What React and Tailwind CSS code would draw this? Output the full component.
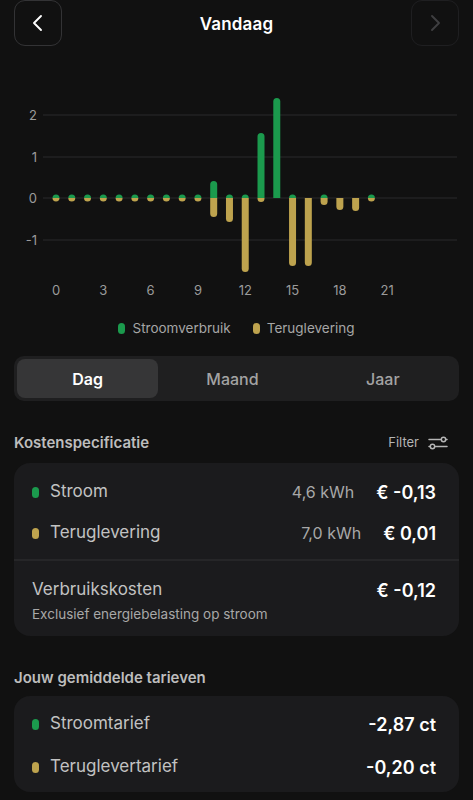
import React from "react";

const GREEN = "#1b9a4d";
const YELLOW = "#bea34e";

const ZERO = 151;
const X0 = 56;
const DX = 15.77;
const R = 3.5;

const bars = [
  [R, R], [R, R], [R, R], [R, R], [R, R], [R, R], [R, R], [R, R], [R, R], [R, R],
  [17, 19], [R, 24], [R, 74], [65, 4], [100, null], [R, 68], [null, 68], [R, 7], [null, 12], [null, 13], [R, R],
];

function upPath(x, h) {
  const hh = Math.max(h, R);
  return `M${x - R},${ZERO} L${x - R},${ZERO - hh + R} A${R},${R} 0 0 1 ${x + R},${ZERO - hh + R} L${x + R},${ZERO} Z`;
}
function downPath(x, h) {
  const hh = Math.max(h, R);
  return `M${x - R},${ZERO} L${x - R},${ZERO + hh - R} A${R},${R} 0 0 0 ${x + R},${ZERO + hh - R} L${x + R},${ZERO} Z`;
}

function Chart() {
  const grid = [
    { v: "2", y: 68 },
    { v: "1", y: 110 },
    { v: "0", y: 151 },
    { v: "-1", y: 193 },
  ];
  const xl = [0, 3, 6, 9, 12, 15, 18, 21];
  return (
    <svg width="473" height="258" viewBox="0 0 473 258" className="block">
      {grid.map((g) => (
        <g key={g.v}>
          <line x1="43" x2="457" y1={g.y} y2={g.y} stroke="#2a2a2c" strokeWidth="1.2" />
          <text x="37" y={g.y + 4.5} textAnchor="end" fill="#9b9b9b" fontSize="13" fontFamily="Inter, sans-serif">
            {g.v}
          </text>
        </g>
      ))}
      {bars.map(([g, y], i) => {
        const x = X0 + i * DX;
        return (
          <g key={i}>
            {g !== null && <path d={upPath(x, g)} fill={GREEN} />}
            {y !== null && <path d={downPath(x, y)} fill={YELLOW} />}
          </g>
        );
      })}
      {xl.map((h) => (
        <text key={h} x={X0 + h * DX} y="248" textAnchor="middle" fill="#9b9b9b" fontSize="13" fontFamily="Inter, sans-serif">
          {h}
        </text>
      ))}
    </svg>
  );
}

function Dot({ color }) {
  return <span className="inline-block w-[7px] h-[11px] rounded-full shrink-0" style={{ backgroundColor: color }} />;
}

function FilterIcon() {
  return (
    <svg width="20" height="14" viewBox="0 0 20 14" fill="none" stroke="#b5b5b5" strokeWidth="1.5" strokeLinecap="round">
      <line x1="1" y1="3.5" x2="12.5" y2="3.5" />
      <circle cx="15.5" cy="3.5" r="2.2" />
      <line x1="18" y1="3.5" x2="19" y2="3.5" />
      <line x1="7.5" y1="10.5" x2="19" y2="10.5" />
      <circle cx="4.5" cy="10.5" r="2.2" />
      <line x1="1" y1="10.5" x2="2" y2="10.5" />
    </svg>
  );
}

export default function App() {
  return (
    <div className="w-[473px] min-h-[800px] bg-[#111111] text-white overflow-hidden" style={{ fontFamily: "Inter, 'Noto Sans', sans-serif" }}>
      {/* Header */}
      <div className="h-[47px] flex items-start justify-between px-[14px]">
        <button className="w-[48px] h-[46px] rounded-[11px] border border-[#333335] flex items-center justify-center">
          <svg width="14" height="18" viewBox="0 0 14 18" fill="none" stroke="#ffffff" strokeWidth="1.9" strokeLinecap="round" strokeLinejoin="round">
            <polyline points="10,2 3,9 10,16" />
          </svg>
        </button>
        <div className="h-[46px] pt-[4px] flex items-center text-[17px] font-semibold tracking-[0.2px]">Vandaag</div>
        <button className="w-[48px] h-[46px] rounded-[11px] border border-[#1f1f21] flex items-center justify-center">
          <svg width="14" height="18" viewBox="0 0 14 18" fill="none" stroke="#3f3f41" strokeWidth="1.9" strokeLinecap="round" strokeLinejoin="round">
            <polyline points="4,2 11,9 4,16" />
          </svg>
        </button>
      </div>

      <Chart />

      {/* Legend */}
      <div className="h-[44px] pt-[2px] flex items-center justify-center gap-[6px] text-[13.5px] text-[#a6a6a6]">
        <div className="flex items-center gap-[7px]">
          <Dot color={GREEN} />
          <span>Stroomverbruik</span>
        </div>
        <div className="flex items-center gap-[7px] ml-[16px]">
          <Dot color={YELLOW} />
          <span>Teruglevering</span>
        </div>
      </div>

      {/* Tabs */}
      <div className="mx-[14px] mt-[7px] h-[45px] rounded-[10px] bg-[#1f1f20] p-[3px] grid grid-cols-3 text-[16px]">
        <div className="rounded-[8px] bg-[#363637] flex items-center justify-center font-semibold text-white mr-[5px]">Dag</div>
        <div className="flex items-center justify-center font-medium text-[#a3a3a3] -ml-[8px]">Maand</div>
        <div className="flex items-center justify-center font-medium text-[#a3a3a3]">Jaar</div>
      </div>

      {/* Kostenspecificatie */}
      <div className="mx-[14px] mt-[32px] h-[20px] flex items-center justify-between">
        <span className="text-[15px] font-semibold text-[#bdbdbd]">Kostenspecificatie</span>
        <div className="flex items-center gap-[9px] mr-[11px] text-[13px] text-[#b5b5b5]">
          <span>Filter</span>
          <FilterIcon />
        </div>
      </div>

      <div className="mx-[14px] mt-[10px] rounded-[16px] bg-[#1b1b1d] overflow-hidden">
        <div className="pl-[18px] pr-[23px] pt-[15px] pb-[12px] flex flex-col gap-[13px]">
          <div className="h-[28px] flex items-center">
            <Dot color={GREEN} />
            <span className="ml-[11px] text-[17px] text-[#c2c2c2]">Stroom</span>
            <span className="ml-auto text-[16px] text-[#a8a8a8]">4,6 kWh</span>
            <span className="ml-[22px] text-[18px] font-semibold text-white">€ -0,13</span>
          </div>
          <div className="h-[28px] flex items-center">
            <Dot color={YELLOW} />
            <span className="ml-[11px] text-[17px] text-[#c2c2c2]">Teruglevering</span>
            <span className="ml-auto text-[16px] text-[#a8a8a8]">7,0 kWh</span>
            <span className="ml-[22px] text-[18px] font-semibold text-white">€ 0,01</span>
          </div>
        </div>
        <div className="h-[2px] bg-[#262628]" />
        <div className="pl-[18px] pr-[23px] pt-[17px] pb-[13px]">
          <div className="h-[24px] flex items-center">
            <span className="text-[17px] text-[#c2c2c2]">Verbruikskosten</span>
            <span className="ml-auto text-[18px] font-semibold text-white">€ -0,12</span>
          </div>
          <div className="mt-[3px] h-[18px] flex items-center text-[13.5px] text-[#a8a8a8]">
            Exclusief energiebelasting op stroom
          </div>
        </div>
      </div>

      {/* Tarieven */}
      <div className="mx-[14px] mt-[32px] h-[20px] flex items-center">
        <span className="text-[15px] font-semibold text-[#bdbdbd]">Jouw gemiddelde tarieven</span>
      </div>
      <div className="mx-[14px] mt-[8px] rounded-[16px] bg-[#1b1b1d] pl-[18px] pr-[23px] pt-[14px] pb-[11px] flex flex-col gap-[15px]">
        <div className="h-[28px] flex items-center">
          <Dot color={GREEN} />
          <span className="ml-[11px] text-[17px] text-[#c2c2c2]">Stroomtarief</span>
          <span className="ml-auto text-[18px] font-semibold text-white">-2,87 ct</span>
        </div>
        <div className="h-[28px] flex items-center">
          <Dot color={YELLOW} />
          <span className="ml-[11px] text-[17px] text-[#c2c2c2]">Teruglevertarief</span>
          <span className="ml-auto text-[18px] font-semibold text-white">-0,20 ct</span>
        </div>
      </div>
    </div>
  );
}
